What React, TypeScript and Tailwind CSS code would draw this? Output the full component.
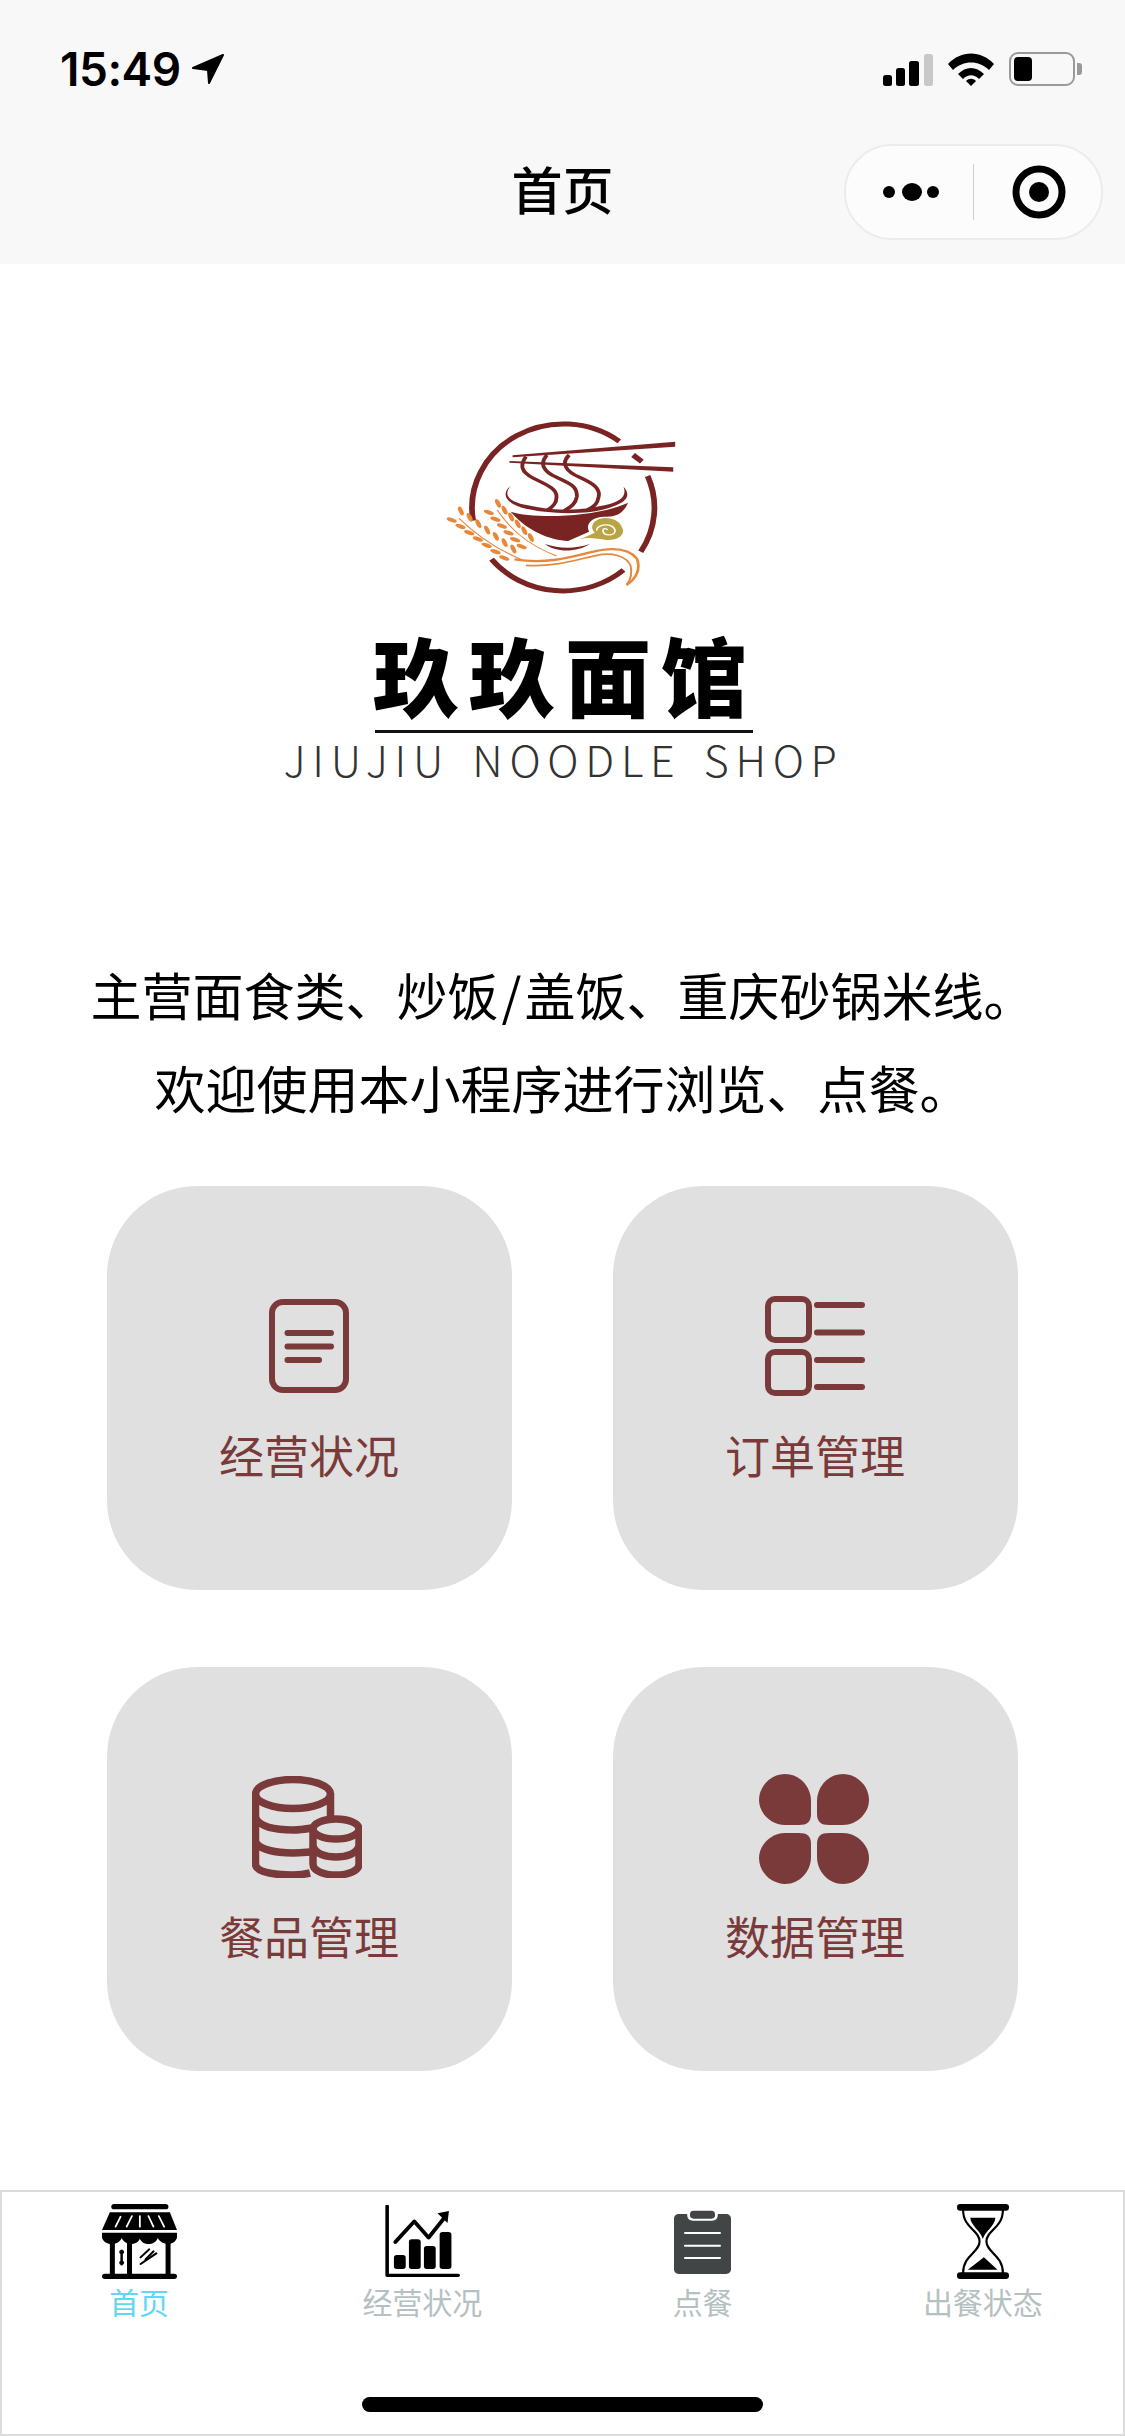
import React from "react";

const MAROON = "#7b3a3a";
const LOGO = "#7a2323";
const ORANGE = "#e8873a";

function Leaf({ x, y, a }: { x: number; y: number; a: number }) {
  return <ellipse cx={x} cy={y} rx={14} ry={6} fill={ORANGE} transform={`rotate(${a} ${x} ${y})`} />;
}

function Wheat({ x0, y0, x1, y1, n }: { x0: number; y0: number; x1: number; y1: number; n: number }) {
  const items = Array.from({ length: n }, (_, i) => i);
  const dx = (x1 - x0) / n;
  const dy = (y1 - y0) / n;
  return (
    <g>
      {items.map((i) => (
        <g key={i}>
          <Leaf x={x0 + dx * i - 14} y={y0 + dy * i + 15} a={22} />
          <Leaf x={x0 + dx * i + 10} y={y0 + dy * i - 12} a={68} />
        </g>
      ))}
    </g>
  );
}

function LogoMark() {
  return (
    <svg width="600" height="220" viewBox="0 0 1568 660" preserveAspectRatio="none" className="block">
      <g fill="none" stroke={LOGO} strokeWidth="15">
        <path d="M557 362 A239 251 0 0 1 939 124" />
        <path d="M975 165 L998 185" />
        <path d="M1013 228 A239 251 0 0 1 995 455" />
        <path d="M950 510 A239 251 0 0 1 605 478" />
      </g>
      <polygon points="660,166 1085,125 1085,140 660,172" fill={LOGO} />
      <polygon points="652,183 1080,202 1080,215 652,188" fill={LOGO} />
      <g fill="none" stroke={LOGO} strokeWidth="10">
        <path d="M695 170 C680 195 680 215 715 235 C750 255 775 265 775 290 C775 310 765 320 750 332" />
        <path d="M750 165 C730 190 740 215 775 232 C810 250 830 260 828 290 C825 310 815 320 795 332" />
        <path d="M808 165 C785 190 800 215 835 232 C870 250 890 265 885 290 C882 310 875 320 855 330" />
      </g>
      <path d="M655 258 C630 280 640 310 690 325 C760 345 870 345 920 320 C960 305 970 285 950 260 C960 290 940 305 900 316 C840 333 760 333 700 316 C650 305 635 285 655 258 Z" fill={LOGO} />
      <path d="M655 335 C720 358 880 352 962 308 C950 340 930 352 900 350 C865 350 850 375 860 395 C840 405 820 415 805 423 C760 420 700 395 655 335 Z" fill={LOGO} />
      <path d="M745 432 C780 445 820 448 862 432 C830 458 770 458 745 432 Z" fill={LOGO} />
      <path d="M835 418 C860 410 880 416 905 420 C938 422 955 402 947 385 C940 358 908 348 885 358 C868 366 862 385 875 398 C860 405 850 412 835 418 Z" fill="#b9a543" />
      <path d="M880 392 C878 372 925 366 928 392 C928 408 898 410 896 392 C896 384 906 384 908 390" fill="none" stroke="#fff" strokeWidth="4" />
      <Wheat x0={515} y0={345} x1={675} y1={478} n={7} />
      <Wheat x0={612} y0={322} x1={715} y1={445} n={6} />
      <path d="M520 355 C570 410 620 450 690 482 M620 330 C650 380 690 430 775 468" fill="none" stroke={ORANGE} strokeWidth="3" />
      <g fill="none" stroke={ORANGE} strokeWidth="7">
        <path d="M665 478 C740 492 800 476 860 458 C910 443 960 440 985 476 C995 505 985 535 958 555" />
        <path d="M695 496 C770 502 830 478 880 466 C920 456 955 468 968 495 C974 520 968 540 958 555" strokeWidth="5" />
      </g>
    </svg>
  );
}

function StatusBar() {
  return (
    <div className="h-[112px] flex items-start justify-between pt-[52px] pl-[60px] pr-[43px]">
      <div className="flex items-center gap-[11px] h-[34px]">
        <span className="text-[46px] leading-[34px] font-semibold text-black tracking-[-0.5px]" style={{ fontFamily: "Inter, 'Liberation Sans', sans-serif" }}>15:49</span>
        <svg width="32" height="30" viewBox="0 0 32 30"><path d="M31 1 L17 29 L16 16 L1 14 Z" fill="#000" stroke="#000" strokeWidth="2" strokeLinejoin="round" /></svg>
      </div>
      <div className="flex items-center gap-[15px] h-[34px]">
        <svg width="50" height="33" viewBox="0 0 50 33">
          <rect x="0" y="22" width="9" height="11" rx="2.5" fill="#000" />
          <rect x="13" y="15" width="9" height="18" rx="2.5" fill="#000" />
          <rect x="26" y="8" width="10" height="25" rx="2.5" fill="#000" />
          <rect x="41" y="1" width="9" height="32" rx="2.5" fill="#c8c8c8" />
        </svg>
        <svg width="46" height="33" viewBox="0 0 46 33">
          <path d="M0 11 C13 -3 33 -3 46 11 L41 17 C31 7 15 7 5 17 Z" fill="#000" />
          <path d="M10 21 C18 13 28 13 36 21 L31 26 C26 21 20 21 15 26 Z" fill="#000" />
          <path d="M18 28 C21 25 25 25 28 28 L23 33 Z" fill="#000" />
        </svg>
        <div className="flex items-center gap-[2px]">
          <div className="w-[66px] h-[34px] rounded-[9px] border-[2.5px] border-[#999] p-[3px]">
            <div className="w-[18px] h-full rounded-[4px] bg-black" />
          </div>
          <div className="w-[5px] h-[12px] rounded-r-[3px] bg-[#999]" />
        </div>
      </div>
    </div>
  );
}

function NavBar() {
  return (
    <div className="relative h-[152px]">
      <div className="pt-[38px] text-center text-[51px] leading-[76px] font-medium text-black">首页</div>
      <div className="absolute left-[844px] top-[32px] w-[259px] h-[96px] rounded-[48px] border-2 border-[#ececec] bg-[#fcfcfc] flex items-center">
        <svg width="127" height="20" viewBox="0 0 127 20" className="shrink-0">
          <ellipse cx="43" cy="10" rx="6" ry="6" fill="#000" />
          <ellipse cx="66" cy="10" rx="10" ry="9" fill="#000" />
          <ellipse cx="87" cy="10" rx="6" ry="6" fill="#000" />
        </svg>
        <div className="w-[1px] h-[56px] bg-[#cfcfcf] shrink-0" />
        <svg width="127" height="54" viewBox="0 0 127 54" className="shrink-0">
          <circle cx="65" cy="27" r="23" fill="none" stroke="#000" strokeWidth="7" />
          <circle cx="65" cy="27" r="10" fill="#000" />
        </svg>
      </div>
    </div>
  );
}

function DocIcon() {
  return (
    <svg width="80" height="94" viewBox="0 0 80 94" fill="none" stroke={MAROON} strokeWidth="6" strokeLinecap="round">
      <rect x="3" y="3" width="74" height="88" rx="11" />
      <path d="M18.500 34 H62 M18.500 47.500 H62 M18.500 61 H50" />
    </svg>
  );
}

function ListIcon() {
  return (
    <svg width="100" height="100" viewBox="0 0 100 100" fill="none" stroke={MAROON} strokeWidth="6" strokeLinecap="round">
      <rect x="3" y="3" width="41" height="41" rx="7" />
      <rect x="3" y="56" width="41" height="41" rx="7" />
      <path d="M52 9 H97 M52 36.500 H97 M52 64 H97 M52 91 H97" />
    </svg>
  );
}

function CoinsIcon() {
  return (
    <svg width="110" height="102" viewBox="0 0 110 102" fill="none" stroke={MAROON} strokeWidth="7.500" className="mr-[5px]">
      <ellipse cx="41" cy="18" rx="37.500" ry="14.500" />
      <path d="M3.500 18 V88 C3.500 96 20 99 41 99 C46 99 52 98.500 58 97" />
      <path d="M78.500 18 V44" />
      <path d="M3.500 42 C8 51 24 54 41 54 C48 54 54 53 60 52" />
      <path d="M3.500 66 C8 74 24 77 41 77 C48 77 52 76.500 58 76" />
      <ellipse cx="84" cy="53" rx="23" ry="10" />
      <path d="M61 53 V88 C61 95 72 99 84 99 C96 99 107 95 107 88 V53" />
      <path d="M61 70 C63 78 74 81 84 81 C94 81 105 78 107 70" />
    </svg>
  );
}

function PetalsIcon() {
  const d1 = "M26 0 C41 0 52 13 52 27 V40 C52 48 48 51 40 51 H26 C12 51 0 39 0 26 C0 12 12 0 26 0 Z";
  return (
    <svg width="110" height="110" viewBox="0 0 110 110" fill={MAROON} className="mt-[3px] mr-[2px]">
      <path d={d1} />
      <path d={d1} transform="translate(110 0) scale(-1 1)" />
      <path d={d1} transform="translate(0 110) scale(1 -1)" />
      <path d={d1} transform="translate(110 110) scale(-1 -1)" />
    </svg>
  );
}

function Card({ icon, label }: { icon: React.ReactNode; label: string }) {
  return (
    <div className="h-[404px] rounded-[90px] bg-[#e0e0e0] pt-[100px] flex flex-col items-center">
      <div className="h-[120px] flex items-center justify-center mr-[1px]">{icon}</div>
      <div className="mt-[15px] mr-[1px] text-[45px] leading-[68px] text-[#7b3a3a]">{label}</div>
    </div>
  );
}

function StoreIcon() {
  return (
    <svg width="75" height="75" viewBox="288 102 210 225" preserveAspectRatio="none">
      <rect x="314" y="102" width="160" height="16" rx="8" fill="#000" />
      <polygon points="310,127 478,127 498,180 288,180" fill="#000" />
      <path d="M340 140 L326 170 M372 138 L357 170 M394 138 V170 M418 138 L432 170 M447 138 L462 170" stroke="#fff" strokeWidth="5" fill="none" strokeLinecap="round" />
      <path d="M288 188 H498 V200 C498 212 486 222 472 222 C458 222 446 210 444 204 C440 216 430 222 418 222 C404 222 396 212 394 206 C390 216 380 222 368 222 C356 222 346 212 343 204 C340 214 330 222 316 222 C300 222 288 212 288 200 Z" fill="#000" />
      <rect x="310" y="212" width="14" height="105" fill="#000" />
      <rect x="358" y="212" width="14" height="105" fill="#000" />
      <rect x="466" y="212" width="14" height="105" fill="#000" />
      <rect x="288" y="311" width="210" height="16" rx="8" fill="#000" />
      <path d="M343 242 V283" stroke="#000" strokeWidth="7" strokeLinecap="round" />
      <ellipse cx="343" cy="246" rx="7" ry="6" fill="#000" />
      <ellipse cx="343" cy="278" rx="7" ry="6" fill="#000" />
      <path d="M396 262 L420 238 M396 282 L440 250" stroke="#000" strokeWidth="6" strokeLinecap="round" />
      <path d="M410 268 L432 244" stroke="#000" strokeWidth="6" strokeLinecap="round" />
    </svg>
  );
}

function ChartIcon() {
  return (
    <svg width="75" height="74" viewBox="1075 102 210 222" preserveAspectRatio="none">
      <path d="M1081 106 V313 H1280" fill="none" stroke="#000" strokeWidth="10" strokeLinecap="round" strokeLinejoin="round" />
      <rect x="1100" y="252" width="33" height="42" rx="8" fill="#000" />
      <rect x="1142" y="205" width="33" height="89" rx="8" fill="#000" />
      <rect x="1184" y="225" width="33" height="69" rx="8" fill="#000" />
      <rect x="1228" y="183" width="33" height="111" rx="8" fill="#000" />
      <path d="M1104 213 L1157 151 L1197 200 L1240 142" fill="none" stroke="#000" strokeWidth="11" strokeLinecap="round" strokeLinejoin="round" />
      <polygon points="1222,127 1254,120 1250,156" fill="#000" />
    </svg>
  );
}

function ClipIcon() {
  return (
    <svg width="57" height="64" viewBox="317 118 160 192" preserveAspectRatio="none">
      <path d="M331 130 H354 C354 145 360 150 370 150 H424 C434 150 440 145 440 130 H463 C471 130 477 136 477 144 V296 C477 304 471 310 463 310 H331 C323 310 317 304 317 296 V144 C317 136 323 130 331 130 Z" fill="#414545" />
      <rect x="362" y="120" width="70" height="24" rx="10" fill="#414545" />
      <path d="M348 187 H446 M348 225 H446 M348 262 H446" stroke="#fff" strokeWidth="6" strokeLinecap="round" />
    </svg>
  );
}

function HourglassIcon() {
  return (
    <svg width="52" height="75" viewBox="1105 102 145 225" preserveAspectRatio="none">
      <rect x="1105" y="102" width="145" height="20" rx="9" fill="#000" />
      <rect x="1105" y="307" width="145" height="20" rx="9" fill="#000" />
      <path d="M1122 120 C1122 175 1168 180 1168 214 C1168 248 1122 255 1122 309 M1233 120 C1233 175 1187 180 1187 214 C1187 248 1233 255 1233 309" fill="none" stroke="#000" strokeWidth="6" />
      <path d="M1142 143 H1212 C1210 170 1185 180 1177 207 C1170 180 1145 170 1142 143 Z" fill="#000" />
      <path d="M1135 299 L1180 262 L1218 299 Z" fill="#000" />
    </svg>
  );
}

function Tab({ icon, label, active }: { icon: React.ReactNode; label: string; active?: boolean }) {
  return (
    <div className={`flex-1 flex flex-col items-center ${active ? "-translate-x-[3px]" : ""}`}>
      <div className="h-[75px] flex items-center justify-center">{icon}</div>
      <div className={`mt-[2px] text-[30px] leading-[40px] ${active ? "text-[#5fd8f3]" : "text-[#b5c1c1]"}`}>{label}</div>
    </div>
  );
}

export default function App() {
  return (
    <div
      className="w-[1125px] h-[2436px] bg-white flex flex-col overflow-hidden"
      style={{ fontFamily: "'Noto Sans CJK SC', 'Noto Sans', sans-serif" }}
    >
      <header className="h-[264px] bg-[#f8f8f8] shrink-0">
        <StatusBar />
        <NavBar />
      </header>
      <main className="flex-1 flex flex-col items-center">
        <div className="mt-[136px] mr-[5px]">
          <LogoMark />
        </div>
        <div className="mt-[9px] h-[90px] text-[86px] leading-[90px] font-black tracking-[10px] text-black pl-[3px] ml-[2px]">玖玖面馆</div>
        <div className="mt-[11px] ml-[2px] w-[378px] h-[3px] bg-[#111]" />
        <div className="mt-[5px] ml-[2px] text-[43px] leading-[40px] font-light tracking-[6.7px] [word-spacing:-5px] text-[#333] whitespace-pre">JIUJIU  NOODLE  SHOP</div>
        <div className="mt-[170px] w-full text-center text-[51px] leading-[93px] text-black">
          <div>主营面食类、炒饭<span className="mx-[3px]">/</span>盖饭、重庆砂锅米线。</div>
          <div>欢迎使用本小程序进行浏览、点餐。</div>
        </div>
        <div className="mt-[52px] grid grid-cols-[405px_405px] gap-x-[101px] gap-y-[77px]">
          <Card icon={<DocIcon />} label="经营状况" />
          <Card icon={<ListIcon />} label="订单管理" />
          <Card icon={<CoinsIcon />} label="餐品管理" />
          <Card icon={<PetalsIcon />} label="数据管理" />
        </div>
      </main>
      <footer className="relative h-[246px] shrink-0 border-2 border-[#dcdcdc] bg-white pt-[12px] flex">
        <Tab icon={<StoreIcon />} label="首页" active />
        <Tab icon={<ChartIcon />} label="经营状况" />
        <Tab icon={<ClipIcon />} label="点餐" />
        <Tab icon={<HourglassIcon />} label="出餐状态" />
        <div className="absolute left-[360px] bottom-[22px] w-[401px] h-[15px] rounded-full bg-black" />
      </footer>
    </div>
  );
}
